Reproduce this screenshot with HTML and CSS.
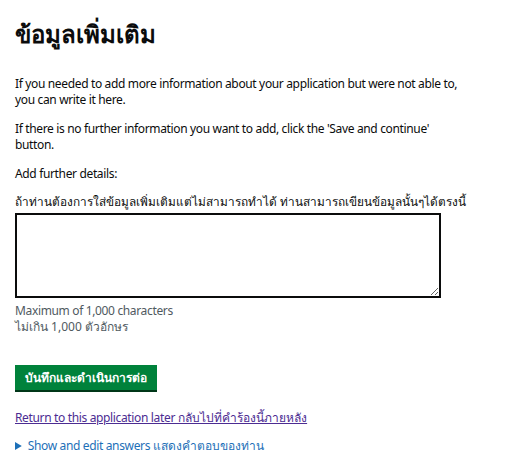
FILE: index.html
```html
<!DOCTYPE html>
<html lang="th">
<head>
<meta charset="utf-8">
<link rel="stylesheet" href="styles.css">
</head>
<body>
<main class="page">
  <h1 class="title">ข้อมูลเพิ่มเติม</h1>
  <p class="body en">If you needed to add more information about your application but were not able to, you can write it here.</p>
  <p class="body en">If there is no further information you want to add, click the 'Save and continue' button.</p>
  <p class="body body-last en">Add further details:</p>
  <label class="label" for="details">ถ้าท่านต้องการใส่ข้อมูลเพิ่มเติมแต่ไม่สามารถทำได้ ท่านสามารถเขียนข้อมูลนั้นๆได้ตรงนี้</label>
  <textarea id="details" class="textarea"></textarea>
  <div class="hint"><span class="en">Maximum of 1,000 characters</span><br>ไม่เกิน 1,000 ตัวอักษร</div>
  <button class="button" type="button">บันทึกและดำเนินการต่อ</button>
  <p class="return"><a class="link visited" href="#"><span class="en">Return to this application later</span> กลับไปที่คำร้องนี้ภายหลัง</a></p>
  <details class="details">
    <summary class="summary"><span class="en">Show and edit answers</span> แสดงคำตอบของท่าน</summary>
  </details>
</main>
</body>
</html>
```
FILE: styles.css
```css
html, body {
  margin: 0;
  padding: 0;
  background: #ffffff;
}
.page {
  padding: 0 15px;
  font-family: "Noto Sans", "Liberation Sans", sans-serif;
  color: #0b0c0c;
  font-size: 12px;
  line-height: 16px;
}
.en {
  letter-spacing: -0.35px;
}
.title {
  margin: 0;
  padding-top: 18px;
  font-size: 24px;
  line-height: 32px;
  font-weight: 700;
  margin-bottom: 26px;
}
.body {
  margin: 0 0 13px 0;
  max-width: 455px;
}
.body-last {
  margin-bottom: 11px;
}
.label {
  display: block;
  margin-top: 0;
  margin-bottom: 4px;
  font-size: 11.8px;
}
.textarea {
  display: block;
  box-sizing: border-box;
  width: 426px;
  height: 85px;
  border: 2px solid #0b0c0c;
  margin: 0;
  resize: vertical;
}
.hint {
  margin-top: 5px;
  color: #505a5f;
}
.button {
  display: block;
  margin-top: 30px;
  background: #00823b;
  color: #fff;
  border: 0;
  box-shadow: 0 2px 0 #003618;
  font-family: inherit;
  font-size: 12px;
  font-weight: 700;
  padding: 5px 10px;
  line-height: 16px;
  height: 25px;
}
.return {
  margin: 20px 0 0 0;
}
.link {
  color: #1d70b8;
}
.link.visited {
  color: #4c2c92;
}
.details {
  margin-top: 12px;
  color: #1d70b8;
}
.summary {
  cursor: pointer;
}
.summary::marker {
  color: #1d70b8;
}
```
